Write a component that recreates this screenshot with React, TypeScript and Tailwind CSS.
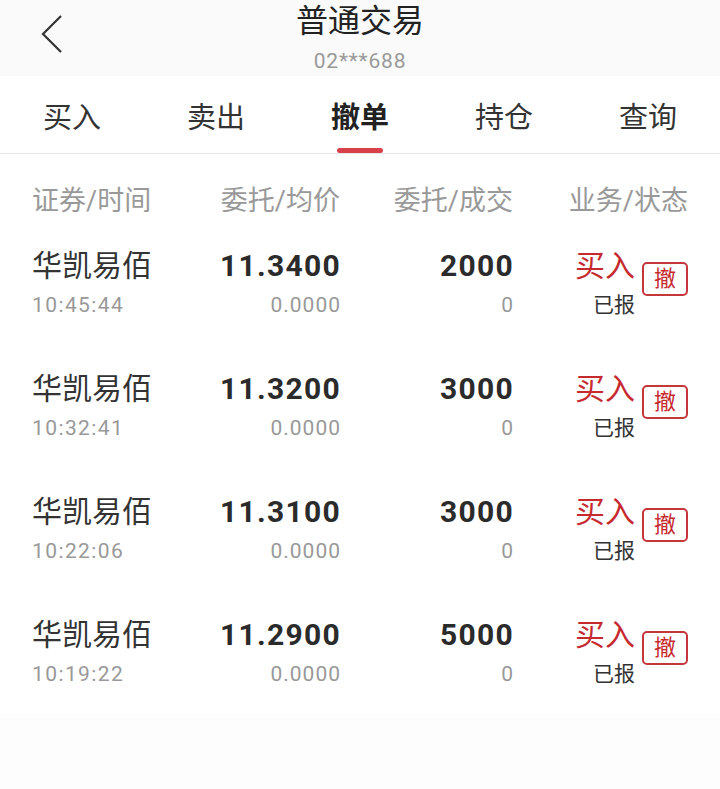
import React from 'react';

const tabs = ['买入', '卖出', '撤单', '持仓', '查询'];

const orders = [
  { name: '华凯易佰', time: '10:45:44', price: '11.3400', avg: '0.0000', qty: '2000', done: '0' },
  { name: '华凯易佰', time: '10:32:41', price: '11.3200', avg: '0.0000', qty: '3000', done: '0' },
  { name: '华凯易佰', time: '10:22:06', price: '11.3100', avg: '0.0000', qty: '3000', done: '0' },
  { name: '华凯易佰', time: '10:19:22', price: '11.2900', avg: '0.0000', qty: '5000', done: '0' },
];

const font = { fontFamily: "Roboto, 'Noto Sans CJK SC', sans-serif" };

export default function App() {
  return (
    <div className="w-[720px] h-[789px] bg-[#fdfdfd] text-[#333]" style={font}>
      {/* header */}
      <div className="relative h-[76px] bg-[#fafafa] flex flex-col items-center pt-[1px]">
        <svg className="absolute left-[40px] top-[14px]" width="24" height="40" viewBox="0 0 24 40">
          <polyline points="21,2 3,20 21,38" fill="none" stroke="#333" strokeWidth="2.2" />
        </svg>
        <div className="text-[32px] leading-[40px] text-[#222]">普通交易</div>
        <div className="text-[21px] leading-[30px] text-[#999] tracking-[0.8px] mt-[5px]">02***688</div>
      </div>

      {/* tabs */}
      <div className="bg-white grid grid-cols-5 h-[78px] border-b border-[#e6e6e6]">
        {tabs.map((t) => (
          <div key={t} className="flex flex-col items-center pt-[22px]">
            <span
              className={
                t === '撤单'
                  ? 'text-[29px] leading-[40px] font-bold text-[#222]'
                  : 'text-[29px] leading-[40px] text-[#333]'
              }
            >
              {t}
            </span>
            {t === '撤单' && <span className="mt-[10px] w-[46px] h-[5px] rounded-full bg-[#d9414a]" />}
          </div>
        ))}
      </div>

      {/* column header */}
      <div className="bg-white grid grid-cols-[120px_188px_173px_175px] px-[32px] h-[67px] pt-[29px] text-[27px] leading-[36px] text-[#999]">
        <div className="whitespace-nowrap">证券/时间</div>
        <div className="text-right whitespace-nowrap">委托/均价</div>
        <div className="text-right whitespace-nowrap">委托/成交</div>
        <div className="text-right whitespace-nowrap">业务/状态</div>
      </div>

      {/* rows */}
      <div className="bg-white">
        {orders.map((o) => (
          <div key={o.time} className="grid grid-cols-[120px_188px_173px_175px] px-[32px] h-[123px] pt-[25px]">
            <div className="flex flex-col whitespace-nowrap">
              <span className="text-[30px] leading-[40px] text-[#333]">{o.name}</span>
              <span className="text-[21px] leading-[30px] mt-[4px] text-[#999] tracking-[1.4px]">{o.time}</span>
            </div>
            <div className="flex flex-col items-end">
              <span className="text-[30px] leading-[40px] font-bold text-[#2b2b2b] tracking-[1.3px] -mr-[1px]">{o.price}</span>
              <span className="text-[21px] leading-[30px] mt-[4px] text-[#999] tracking-[1px] -mr-[1px]">{o.avg}</span>
            </div>
            <div className="flex flex-col items-end">
              <span className="text-[30px] leading-[40px] font-bold text-[#2b2b2b] tracking-[1.3px] -mr-[1px]">{o.qty}</span>
              <span className="text-[21px] leading-[30px] mt-[4px] text-[#999]">{o.done}</span>
            </div>
            <div className="flex justify-end items-start">
              <div className="flex flex-col items-end">
                <span className="text-[30px] leading-[40px] text-[#c62a2f]">买入</span>
                <span className="text-[21px] leading-[30px] mt-[4px] text-[#333]">已报</span>
              </div>
              <button className="ml-[7px] mt-[16px] w-[46px] h-[34px] border-2 border-[#c4383c] rounded-[5px] text-[22px] leading-[30px] text-[#c62a2f] flex items-center justify-center">
                撤
              </button>
            </div>
          </div>
        ))}
      </div>
    </div>
  );
}
